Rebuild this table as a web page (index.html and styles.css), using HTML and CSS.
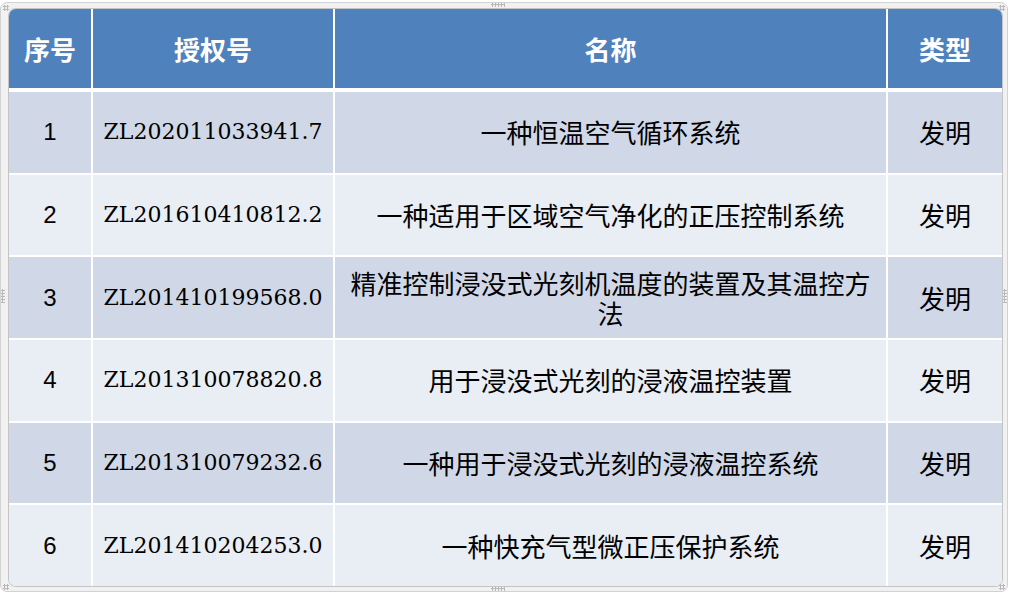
FILE: index.html
```html
<!DOCTYPE html>
<html lang="zh">
<head>
<meta charset="utf-8">
<link rel="stylesheet" href="styles.css">
</head>
<body>
<div class="frame">
  <span class="handle h-tl"></span>
  <span class="handle h-tm"></span>
  <span class="handle h-tr"></span>
  <span class="handle h-ml"></span>
  <span class="handle h-mr"></span>
  <span class="handle h-bl"></span>
  <span class="handle h-bm"></span>
  <span class="handle h-br"></span>
  <div class="table">
    <div class="cell head">序号</div>
    <div class="cell head">授权号</div>
    <div class="cell head">名称</div>
    <div class="cell head">类型</div>

    <div class="cell odd num">1</div>
    <div class="cell odd code">ZL202011033941.7</div>
    <div class="cell odd name">一种恒温空气循环系统</div>
    <div class="cell odd name">发明</div>

    <div class="cell even num">2</div>
    <div class="cell even code">ZL201610410812.2</div>
    <div class="cell even name">一种适用于区域空气净化的正压控制系统</div>
    <div class="cell even name">发明</div>

    <div class="cell odd num">3</div>
    <div class="cell odd code">ZL201410199568.0</div>
    <div class="cell odd name">精准控制浸没式光刻机温度的装置及其温控方法</div>
    <div class="cell odd name">发明</div>

    <div class="cell even num">4</div>
    <div class="cell even code">ZL201310078820.8</div>
    <div class="cell even name">用于浸没式光刻的浸液温控装置</div>
    <div class="cell even name">发明</div>

    <div class="cell odd num">5</div>
    <div class="cell odd code">ZL201310079232.6</div>
    <div class="cell odd name">一种用于浸没式光刻的浸液温控系统</div>
    <div class="cell odd name">发明</div>

    <div class="cell even num">6</div>
    <div class="cell even code">ZL201410204253.0</div>
    <div class="cell even name">一种快充气型微正压保护系统</div>
    <div class="cell even name">发明</div>
  </div>
</div>
</body>
</html>
```

FILE: styles.css
```css
html, body {
  margin: 0;
  padding: 0;
  background: #ffffff;
}

body {
  width: 1010px;
  height: 596px;
  overflow: hidden;
  font-family: "Noto Sans CJK SC", "Noto Sans", sans-serif;
}

.frame {
  position: relative;
  box-sizing: border-box;
  width: 1008px;
  height: 590px;
  margin: 2px 0 0 0;
  padding: 6px 5px 3px 8px;
  background: #f1f1f1;
  border: 1px solid #d2d2d2;
  border-radius: 7px;
}

.table {
  display: grid;
  grid-template-columns: 82px 240px 551px 114px;
  grid-template-rows: 81px repeat(6, 1fr);
  gap: 2px;
  width: 993px;
  height: 577px;
  background: #ffffff;
  border-radius: 7px;
  overflow: hidden;
  box-shadow: 0 0 0 1px #c4c4c4;
}

.cell {
  display: flex;
  align-items: center;
  justify-content: center;
  text-align: center;
  color: #000000;
  font-size: 26px;
  line-height: 30px;
  padding: 0 14px;
}

.head {
  margin-bottom: 2px;
  background: #4f81bd;
  color: #ffffff;
  font-weight: bold;
  font-size: 26px;
}

.odd {
  background: #d0d8e8;
}

.even {
  background: #e9edf4;
}

.num {
  font-family: "Liberation Sans", "Noto Sans", sans-serif;
  font-size: 24px;
  padding: 0;
}

.code {
  font-family: "DejaVu Serif", "Liberation Serif", serif;
  font-size: 22px;
  padding: 0;
  letter-spacing: 0;
}

.handle {
  position: absolute;
  width: 6px;
  height: 6px;
  background-image: radial-gradient(circle, #b8b8b8 1px, transparent 1.3px);
  background-size: 3px 3px;
}

.h-tl { left: 2px; top: 2px; }
.h-tr { right: 2px; top: 2px; }
.h-bl { left: 2px; bottom: 1px; }
.h-br { right: 2px; bottom: 1px; }
.h-tm { left: 490px; top: 0; width: 14px; height: 4px; }
.h-bm { left: 490px; bottom: 0; width: 14px; height: 4px; }
.h-ml { left: 0; top: 286px; width: 4px; height: 14px; }
.h-mr { right: 0; top: 286px; width: 4px; height: 14px; }
```
